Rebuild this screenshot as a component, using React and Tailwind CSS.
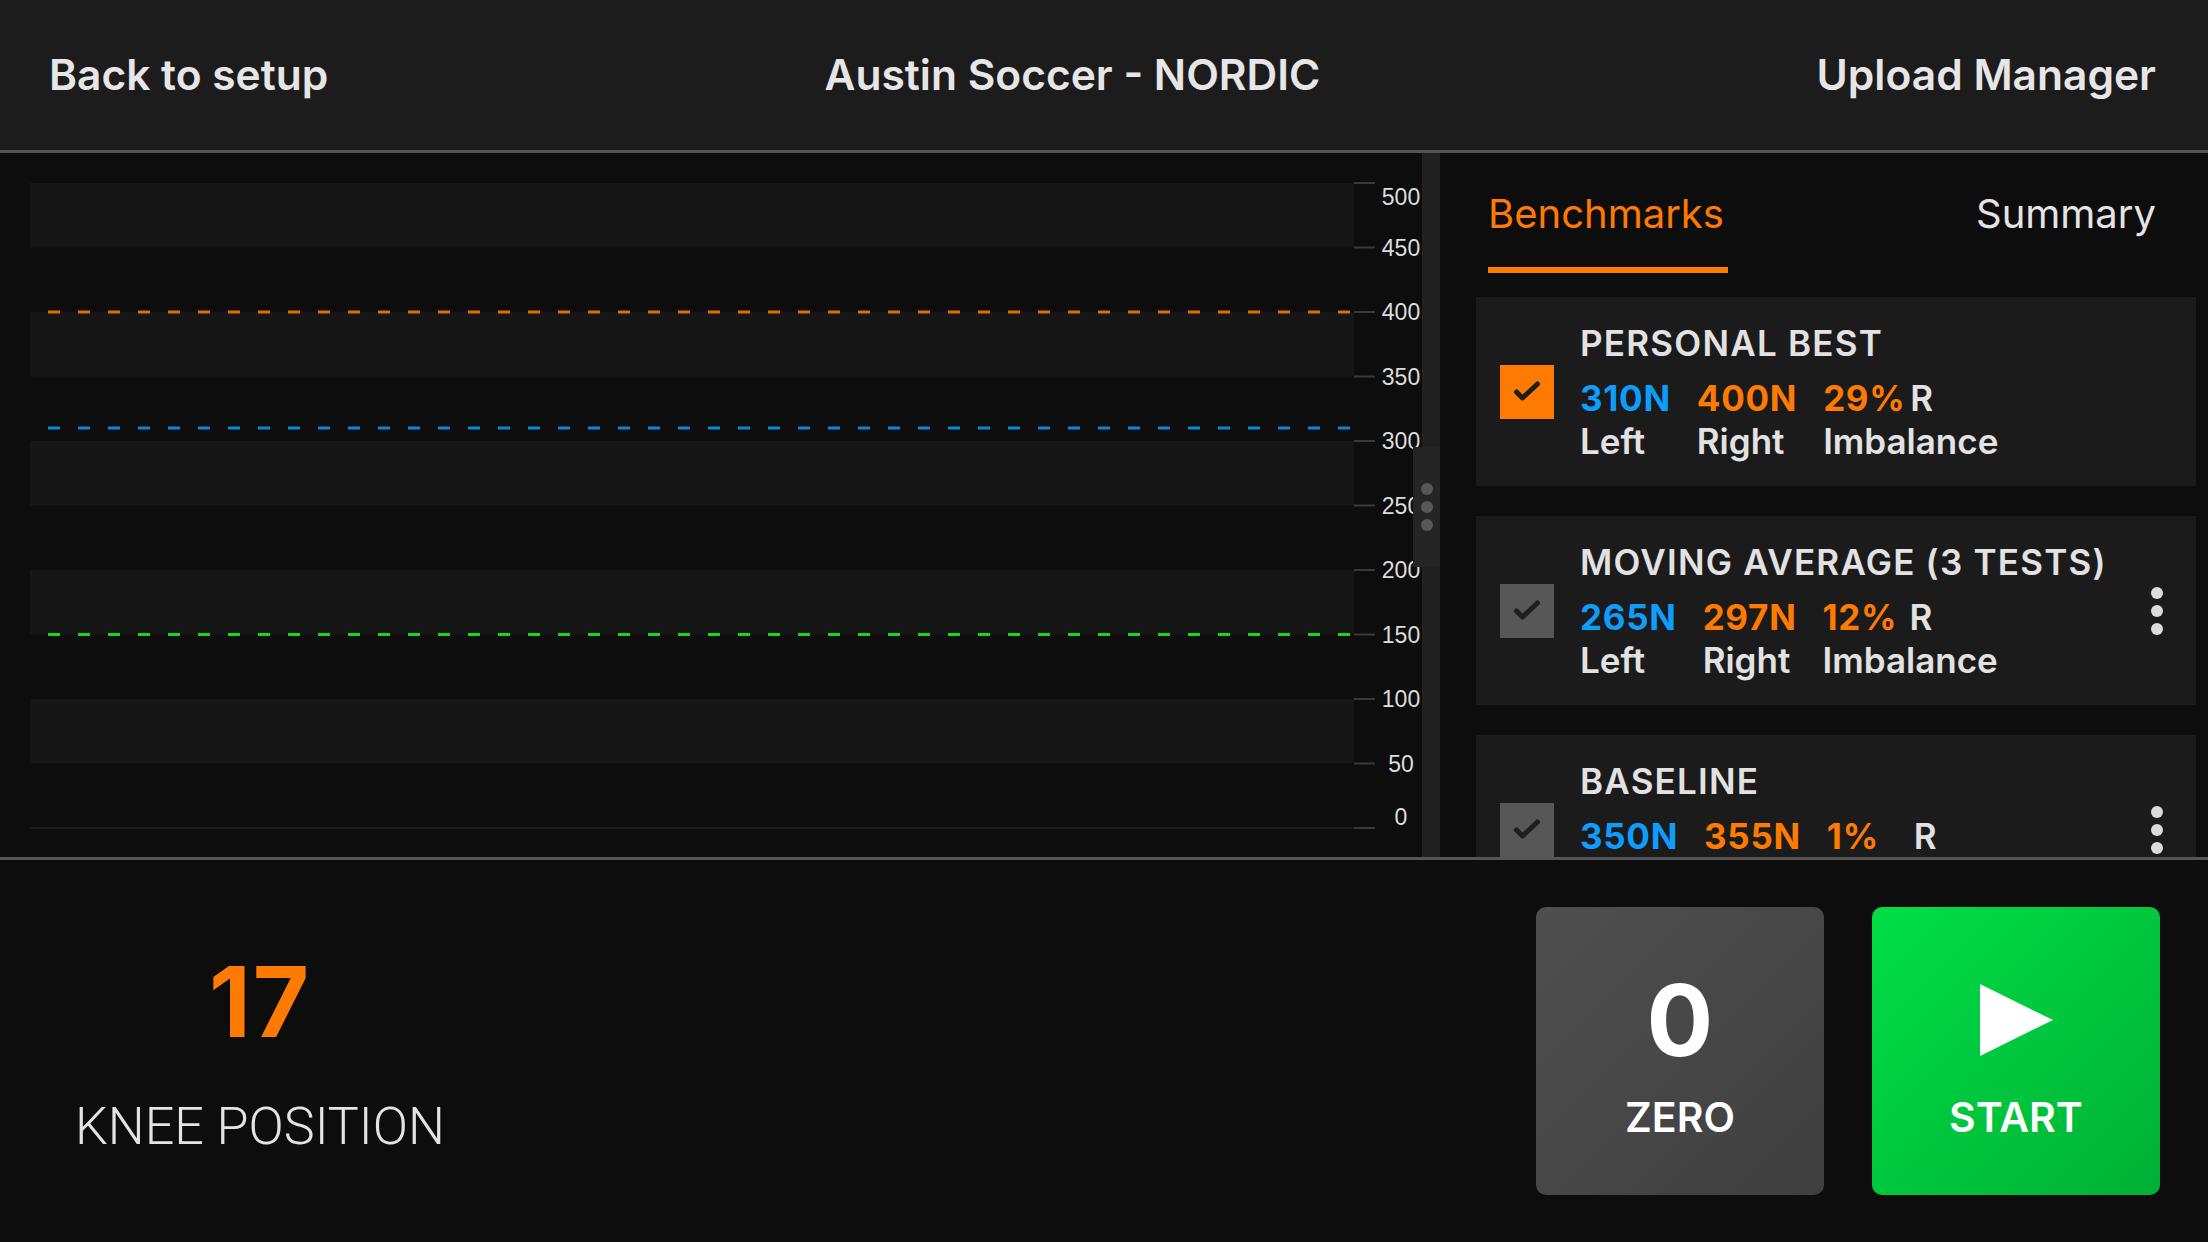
import { Fragment } from 'react';

const ticks = [500, 450, 400, 350, 300, 250, 200, 150, 100, 50, 0];
const yOf = (v) => 30 + (500 - v) * 1.29;

const benchmarks = [
  { title: 'PERSONAL BEST', active: true, left: '310N', right: '400N', imbalance: '29%', menu: false },
  { title: 'MOVING AVERAGE (3 TESTS)', active: false, left: '265N', right: '297N', imbalance: '12%', menu: true },
  { title: 'BASELINE', active: false, left: '350N', right: '355N', imbalance: '1%', menu: true },
];

function Chart() {
  // label for the top and bottom ticks is pushed inside the plot
  const labelY = (v) => (v === 500 ? 44 : v === 0 ? 664 : yOf(v));

  return (
    <svg width="1422" height="704" className="block">
      {[500, 400, 300, 200, 100].map((v) => (
        <rect key={v} x="30" y={yOf(v)} width="1324" height="64.5" fill="#161616" />
      ))}
      <line x1="30" x2="1354" y1={yOf(0)} y2={yOf(0)} stroke="#1c1c1c" strokeWidth="2" />
      {ticks.map((v) => (
        <Fragment key={v}>
          <line x1="1354" x2="1375" y1={yOf(v)} y2={yOf(v)} stroke="#3a3a3a" strokeWidth="2" />
          <text
            x="1401"
            y={labelY(v)}
            textAnchor="middle"
            dominantBaseline="central"
            fontFamily="'Liberation Sans', Arial, sans-serif"
            fontSize="23"
            fill="#dcdcdc"
          >
            {v}
          </text>
        </Fragment>
      ))}
      <line x1="48" x2="1352" y1={yOf(400)} y2={yOf(400)} stroke="#dc6d05" strokeWidth="3" strokeDasharray="12 18" />
      <line x1="48" x2="1352" y1={yOf(310)} y2={yOf(310)} stroke="#0a86d9" strokeWidth="3" strokeDasharray="12 18" />
      <line x1="48" x2="1352" y1={yOf(150)} y2={yOf(150)} stroke="#17d617" strokeWidth="3" strokeDasharray="12 18" />
    </svg>
  );
}

function CheckBox({ active }) {
  return (
    <div className={`w-[54px] h-[54px] shrink-0 ${active ? 'bg-[#ff7a00]' : 'bg-[#575757]'}`}>
      <svg width="54" height="54" viewBox="0 0 54 54">
        <path d="M16.5 27 L22.5 33 L37.5 19" fill="none" stroke="#1e1e1e" strokeWidth="5" strokeLinecap="round" strokeLinejoin="round" />
      </svg>
    </div>
  );
}

function BenchmarkCard({ item }) {
  return (
    <div className="h-[189px] shrink-0 bg-[#1b1b1b] flex items-center pl-6">
      <CheckBox active={item.active} />
      <div className="ml-[26px]">
        <div className="text-[35px] leading-[40px] font-semibold tracking-[0.035em] text-[#e2e2e2]">{item.title}</div>
        <div className="mt-[15px] flex gap-[26px] text-[35px] leading-[40px]">
          <div>
            <div className="font-bold tracking-[0.02em] text-[#0e9dfc]">{item.left}</div>
            <div className="mt-[3px] font-semibold text-[#e2e2e2]">Left</div>
          </div>
          <div>
            <div className="font-bold tracking-[0.02em] text-[#ff7a00]">{item.right}</div>
            <div className="mt-[3px] font-semibold text-[#e2e2e2]">Right</div>
          </div>
          <div>
            <div className="flex font-bold">
              <span className="w-[87px] tracking-[0.02em] text-[#ff7a00]">{item.imbalance}</span>
              <span className="font-semibold text-[#e2e2e2]">R</span>
            </div>
            <div className="mt-[3px] font-semibold text-[#e2e2e2]">Imbalance</div>
          </div>
        </div>
      </div>
      {item.menu && (
        <div className="ml-auto mr-[33px] flex flex-col gap-[6px]">
          <span className="w-3 h-3 rounded-full bg-[#dcdcdc]" />
          <span className="w-3 h-3 rounded-full bg-[#dcdcdc]" />
          <span className="w-3 h-3 rounded-full bg-[#dcdcdc]" />
        </div>
      )}
    </div>
  );
}

export default function App() {
  return (
    <div className="w-[2208px] h-[1242px] flex flex-col overflow-hidden bg-[#0d0d0d] font-[family-name:Inter,sans-serif] text-[#e2e2e2]">
      {/* Header */}
      <div className="h-[153px] shrink-0 bg-[#1c1c1c] border-b-[3px] border-[#555] flex items-center justify-between pl-[49px] pr-[52px] text-[42.5px] font-semibold text-[#e6e6e6]">
        <span>Back to setup</span>
        <span>Austin Soccer - NORDIC</span>
        <span>Upload Manager</span>
      </div>

      {/* Chart + benchmarks */}
      <div className="h-[707px] shrink-0 flex border-b-[3px] border-[#555]">
        <div className="relative w-[1440px] shrink-0 flex">
          <Chart />
          <div className="w-[18px] bg-[#212121]" />
          <div className="absolute left-[1413px] top-[294px] w-[27px] h-[120px] bg-[#252525] flex flex-col items-center justify-center gap-[6px] pl-[1px]">
            <span className="w-3 h-3 rounded-full bg-[#575757]" />
            <span className="w-3 h-3 rounded-full bg-[#575757]" />
            <span className="w-3 h-3 rounded-full bg-[#575757]" />
          </div>
        </div>

        <div className="flex-1 overflow-hidden pl-[36px] pr-[12px] flex flex-col">
          <div className="h-[120px] shrink-0 flex justify-between pl-[12px] pr-[40px]">
            <div className="flex flex-col">
              <span className="pt-[37px] text-[40px] leading-[48px] text-[#ff7a00]">Benchmarks</span>
              <span className="mt-[29px] h-[6px] w-[240px] bg-[#ff7a00]" />
            </div>
            <span className="pt-[37px] text-[40px] leading-[48px] text-[#e4e4e4]">Summary</span>
          </div>
          <div className="mt-[24px] flex flex-col gap-[30px]">
            {benchmarks.map((b) => (
              <BenchmarkCard key={b.title} item={b} />
            ))}
          </div>
        </div>
      </div>

      {/* Bottom controls */}
      <div className="flex-1 flex items-center justify-between">
        <div className="ml-[75px] mt-[5px] flex flex-col items-center">
          <span className="text-[97px] leading-[94px] font-bold tracking-[0.02em] text-[#ff7a00]">17</span>
          <span className="mt-[52px] text-[52px] leading-[52px] font-[family-name:Roboto,sans-serif] font-light text-[#e4e4e4]">
            KNEE POSITION
          </span>
        </div>
        <div className="mr-[48px] flex gap-[48px]">
          <button className="w-[288px] h-[288px] rounded-[10px] bg-gradient-to-br from-[#4f4f4f] to-[#3f3f3f] flex flex-col items-center pt-[63px] text-white">
            <span className="text-[99px] leading-[100px] font-bold">0</span>
            <span className="mt-[27px] text-[41px] leading-[41px] font-semibold">ZERO</span>
          </button>
          <button className="w-[288px] h-[288px] rounded-[10px] bg-gradient-to-br from-[#00df46] to-[#00b035] flex flex-col items-center pt-[77px] text-white">
            <svg width="73" height="72" viewBox="0 0 73 72">
              <polygon points="0,0 73,36 0,72" fill="#ffffff" />
            </svg>
            <span className="mt-[41px] text-[41px] leading-[41px] font-semibold">START</span>
          </button>
        </div>
      </div>
    </div>
  );
}
